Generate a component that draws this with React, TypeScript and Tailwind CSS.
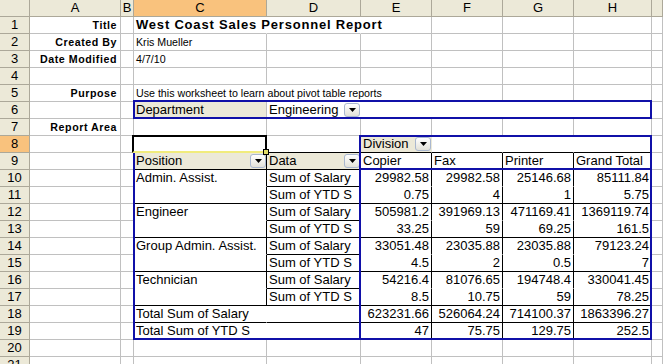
import React from "react";

type B = "g" | "k" | "n";
type Spec = { t?: React.ReactNode; r?: B; b?: B; c?: string };

const BR: Record<B, string> = {
  g: "border-r-[#c0c0c0]",
  k: "border-r-black",
  n: "border-r-transparent",
};
const BB: Record<B, string> = {
  g: "border-b-[#c0c0c0]",
  k: "border-b-black",
  n: "border-b-transparent",
};

const LBL = "justify-end pr-[3px] font-bold text-[10.67px] leading-[17px] tracking-[0.55px]";
const SM = "pl-[2px] text-[10.67px] leading-[17px]";
const PV = "pl-[2px] text-[13px] leading-[16px]";
const NUM = "justify-end pr-[2px] text-[13px] leading-[16px]";
const FIELD = "pl-[2px] text-[13px] leading-[16px] bg-[#ece9d8]";

function DD() {
  return (
    <div className="ml-auto mt-[1px] flex h-[14px] w-[16px] shrink-0 items-center justify-center rounded-[3px] border border-[#a9b7cf] bg-linear-to-b from-white to-[#e2e1d8]">
      <svg width="7" height="4" viewBox="0 0 7 4">
        <path d="M0 0h7L3.5 4z" fill="black" />
      </svg>
    </div>
  );
}

function Cell({ s }: { s: Spec }) {
  return (
    <div
      className={`flex min-w-0 items-start whitespace-nowrap border-r border-b ${BR[s.r ?? "g"]} ${BB[s.b ?? "g"]} ${s.c ?? ""}`}
    >
      {s.t}
    </div>
  );
}

const groups = [
  { n: "Admin. Assist.", s: ["29982.58", "29982.58", "25146.68", "85111.84"], y: ["0.75", "4", "1", "5.75"] },
  { n: "Engineer", s: ["505981.2", "391969.13", "471169.41", "1369119.74"], y: ["33.25", "59", "69.25", "161.5"] },
  { n: "Group Admin. Assist.", s: ["33051.48", "23035.88", "23035.88", "79123.24"], y: ["4.5", "2", "0.5", "7"] },
  { n: "Technician", s: ["54216.4", "81076.65", "194748.4", "330041.45"], y: ["8.5", "10.75", "59", "78.25"] },
];

function numRow(vals: string[], b: B): Spec[] {
  return [
    { t: vals[0], r: "k", b, c: NUM },
    { t: vals[1], r: "k", b, c: NUM },
    { t: vals[2], r: "k", b, c: NUM },
    { t: vals[3], r: "n", b, c: NUM },
  ];
}

const rows: Spec[][] = [
  // 1
  [{ t: "Title", c: LBL }, {}, { t: "West Coast Sales Personnel Report", r: "n", c: "pl-[2px] font-bold text-[13px] leading-[16px] tracking-[0.8px]" }, { r: "n" }, {}, {}, {}, {}, {}],
  // 2
  [{ t: "Created By", c: LBL }, {}, { t: "Kris Mueller", c: SM }, {}, {}, {}, {}, {}, {}],
  // 3
  [{ t: "Date Modified", c: LBL }, {}, { t: "4/7/10", c: SM }, {}, {}, {}, {}, {}, {}],
  // 4
  [{}, {}, {}, {}, {}, {}, {}, {}, {}],
  // 5
  [{ t: "Purpose", c: LBL }, {}, { t: "Use this worksheet to learn about pivot table reports", r: "n", c: SM }, { r: "n" }, {}, {}, {}, {}, {}],
  // 6
  [
    {},
    {},
    { t: "Department", c: FIELD },
    { t: (<><span>Engineering</span><DD /></>), r: "n", c: PV },
    { r: "n" },
    { r: "n" },
    { r: "n" },
    { r: "n" },
    {},
  ],
  // 7
  [{ t: "Report Area", c: LBL }, {}, {}, {}, {}, {}, {}, {}, {}],
  // 8
  [
    {},
    {},
    {},
    { b: "k" },
    { t: (<><span>Division</span><DD /></>), r: "n", b: "k", c: FIELD },
    { r: "n", b: "k" },
    { r: "n", b: "k" },
    { r: "n", b: "k" },
    {},
  ],
  // 9
  [
    {},
    { r: "n" },
    { t: (<><span>Position</span><DD /></>), r: "k", b: "k", c: FIELD },
    { t: (<><span>Data</span><DD /></>), r: "n", b: "k", c: FIELD },
    { t: "Copier", r: "k", b: "n", c: PV },
    { t: "Fax", r: "k", b: "n", c: PV },
    { t: "Printer", r: "k", b: "n", c: PV },
    { t: "Grand Total", r: "n", b: "n", c: PV },
    {},
  ],
  ...groups.flatMap((g) => [
    [
      {},
      { r: "n" },
      { t: g.n, r: "k", b: "n", c: PV } as Spec,
      { t: "Sum of Salary", r: "n", b: "k", c: PV } as Spec,
      ...numRow(g.s, "n"),
      {},
    ],
    [
      {},
      { r: "n" },
      { r: "k", b: "k" } as Spec,
      { t: "Sum of YTD S", r: "n", b: "k", c: PV } as Spec,
      ...numRow(g.y, "k"),
      {},
    ],
  ]),
  // 18
  [
    {},
    { r: "n" },
    { t: "Total Sum of Salary", r: "n", b: "k", c: PV },
    { r: "n", b: "k" },
    ...numRow(["623231.66", "526064.24", "714100.37", "1863396.27"], "k"),
    {},
  ],
  // 19
  [
    {},
    { r: "n" },
    { t: "Total Sum of YTD S", r: "n", b: "n", c: PV },
    { r: "n", b: "n" },
    ...numRow(["47", "75.75", "129.75", "252.5"], "n"),
    {},
  ],
  // 20
  [{}, {}, {}, {}, {}, {}, {}, {}, {}],
  // 21
  [{}, {}, {}, {}, {}, {}, {}, {}, {}],
];

const cols = ["A", "B", "C", "D", "E", "F", "G", "H", ""];

export default function App() {
  return (
    <div className="h-[364px] w-[663px] overflow-hidden bg-white font-['Liberation_Sans',Arial,sans-serif] text-black">
      <div className="relative grid grid-cols-[30px_91px_13px_133px_94px_71px_71px_71px_78px_1fr] grid-rows-[repeat(22,17px)]">
        <div className="border-r border-b border-[#aca899] bg-[#ece9d8]" />
        {cols.map((c, i) => (
          <div
            key={"h" + i}
            className={`border-r border-b border-[#aca899] text-center text-[13px] leading-[16px] ${c === "C" ? "bg-[#f9c27d]" : "bg-[#ece9d8]"}`}
          >
            {c}
          </div>
        ))}
        {rows.map((r, ri) => (
          <React.Fragment key={"r" + ri}>
            <div
              className={`border-r border-b border-[#aca899] text-center text-[13px] leading-[16px] ${ri === 7 ? "bg-[#f9c27d]" : "bg-[#ece9d8]"}`}
            >
              {ri + 1}
            </div>
            {r.map((s, ci) => (
              <Cell key={ci} s={s} />
            ))}
          </React.Fragment>
        ))}

        {/* page field frame */}
        <div className="absolute left-[133px] top-[100px] h-[19px] w-[519px] border-2 border-[#1010a8]" />
        {/* data area frame */}
        <div className="absolute left-[359px] top-[135px] h-[205px] w-[293px] border-2 border-[#1010a8]" />
        {/* row area frame */}
        <div className="absolute left-[133px] top-[152px] h-[188px] w-[228px] border-b-2 border-l-2 border-[#1010a8]" />
        {/* column header bottom line */}
        <div className="absolute left-[360px] top-[168px] h-[2px] w-[292px] bg-[#1010a8]" />
        {/* active cell selection */}
        <div className="absolute left-[132px] top-[135px] h-[18px] w-[135px] border-2 border-black border-b-[#f1ec7c]" />
        <div className="absolute left-[263px] top-[149px] h-[6px] w-[6px] border border-black bg-[#e2dc6a]" />
      </div>
    </div>
  );
}
